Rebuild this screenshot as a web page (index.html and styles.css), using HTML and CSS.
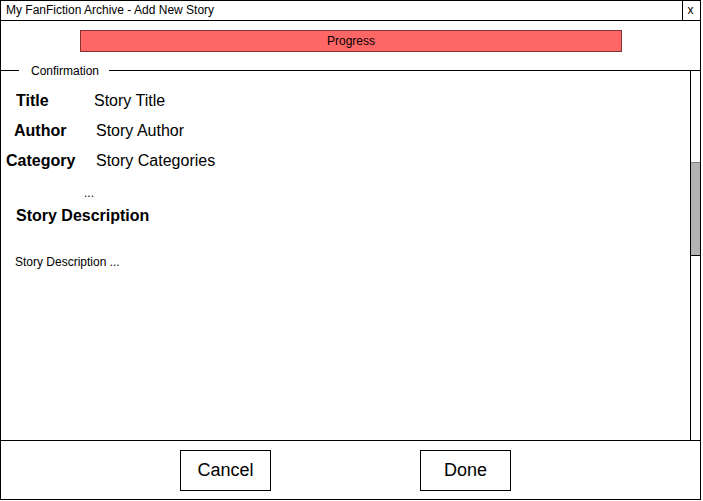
FILE: index.html
```html
<!DOCTYPE html>
<html>
<head>
<meta charset="utf-8">
<link rel="stylesheet" href="styles.css">
</head>
<body>
<div class="window">
  <div class="titlebar">
    <div class="title">My FanFiction Archive - Add New Story</div>
    <div class="close">x</div>
  </div>
  <div class="progress-area">
    <div class="progress">Progress</div>
  </div>
  <div class="body">
    <div class="legend">Confirmation</div>
    <div class="content">
      <div class="row"><span class="label l-title">Title</span><span class="value v-title">Story Title</span></div>
      <div class="row"><span class="label l-author">Author</span><span class="value">Story Author</span></div>
      <div class="row"><span class="label l-cat">Category</span><span class="value">Story Categories</span></div>
      <div class="dots">...</div>
      <div class="desc-head">Story Description</div>
      <div class="desc">Story Description ...</div>
    </div>
    <div class="scrollbar">
      <div class="thumb"></div>
    </div>
  </div>
  <div class="footer">
    <div class="btn">Cancel</div>
    <div class="btn">Done</div>
  </div>
</div>
</body>
</html>
```
FILE: styles.css
```css
* { box-sizing: border-box; }
html, body { margin: 0; padding: 0; background: #fff; }
body { font-family: "Liberation Sans", Arial, sans-serif; color: #000; }

.window {
  width: 701px;
  height: 500px;
  border: 1px solid #000;
  display: flex;
  flex-direction: column;
}

.titlebar {
  height: 20px;
  border-bottom: 1px solid #000;
  display: flex;
  font-size: 12px;
  line-height: 19px;
}
.title { flex: 1; padding-left: 5px; }
.close {
  width: 18px;
  border-left: 1px solid #000;
  text-align: center;
  padding-right: 2px;
}

.progress-area {
  height: 49px;
  padding: 9px 0 0 79px;
}
.progress {
  width: 542px;
  height: 22px;
  background: #ff6666;
  border: 1px solid #7f3333;
  font-size: 12px;
  line-height: 20px;
  text-align: center;
}

.body {
  position: relative;
  flex: 1;
  border-top: 1px solid #000;
  display: flex;
}
.legend {
  position: absolute;
  left: 18px;
  top: -7px;
  background: #fff;
  font-size: 12px;
  line-height: 14px;
  padding: 0 10px 0 12px;
}
.content {
  flex: 1;
  padding-top: 15px;
}
.row {
  display: flex;
  height: 30px;
  align-items: center;
  font-size: 16px;
}
.label { font-weight: bold; }
.l-title { padding-left: 15px; width: 93px; }
.l-author { padding-left: 13px; width: 95px; }
.l-cat { padding-left: 5px; width: 95px; }
.dots {
  font-size: 12px;
  line-height: 14px;
  padding-left: 83px;
  margin-top: 10px;
}
.desc-head {
  font-size: 16px;
  font-weight: bold;
  line-height: 20px;
  padding-left: 15px;
  margin-top: 6px;
}
.desc {
  font-size: 12px;
  line-height: 14px;
  padding-left: 14px;
  margin-top: 29px;
}

.scrollbar {
  width: 10px;
  border-left: 1px solid #000;
  padding-top: 91px;
}
.thumb {
  height: 94px;
  background: #b3b3b3;
  border-top: 1px solid #808080;
  border-bottom: 1px solid #000;
}

.footer {
  height: 59px;
  border-top: 1px solid #000;
  display: flex;
  padding: 9px 0 0 179px;
  gap: 149px;
}
.btn {
  width: 91px;
  height: 41px;
  border: 1px solid #000;
  font-size: 18px;
  line-height: 39px;
  text-align: center;
}
```
